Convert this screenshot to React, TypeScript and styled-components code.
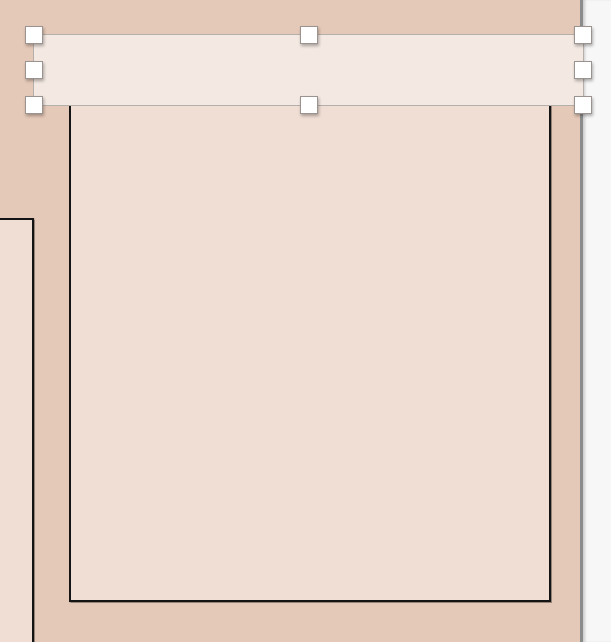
import React from "react";
import styled, { createGlobalStyle } from "styled-components";

const GlobalStyle = createGlobalStyle`
  html, body {
    margin: 0;
    padding: 0;
    background: #e5c9b8;
    font-family: "Liberation Sans", Arial, sans-serif;
    overflow: hidden;
  }
`;

type Frame = { left: number; top: number; width: number; height: number };

const frames: Frame[] = [
  { left: -20, top: 218, width: 54, height: 460 },
  { left: 69, top: 60, width: 482, height: 542 },
];

const selection: Frame = { left: 33, top: 34, width: 551, height: 72 };

const handlePoints = [
  [0, 0],
  [0.5, 0],
  [1, 0],
  [0, 0.5],
  [1, 0.5],
  [0, 1],
  [0.5, 1],
  [1, 1],
];

function App() {
  return (
    <>
      <GlobalStyle />
      <Editor>
        <Canvas>
          {frames.map((f, i) => (
            <Box key={i} $f={f} />
          ))}
          <Selection $f={selection}>
            {handlePoints.map(([x, y], i) => (
              <Handle key={i} $x={x} $y={y} />
            ))}
          </Selection>
        </Canvas>
        <SidePanel />
      </Editor>
    </>
  );
}

const Editor = styled.div`
  display: flex;
  width: 611px;
  height: 642px;
  overflow: hidden;
`;

const Canvas = styled.div`
  position: relative;
  flex: 0 0 580px;
  height: 100%;
  background: #e5c9b8;
`;

const SidePanel = styled.div`
  flex: 1;
  height: 100%;
  background: #f7f7f7;
  border-left: 3px solid #8c8c8c;
  box-shadow: inset 3px 0 3px -1px rgba(0, 0, 0, 0.18);
`;

const Box = styled.div<{ $f: Frame }>`
  position: absolute;
  left: ${(p) => p.$f.left}px;
  top: ${(p) => p.$f.top}px;
  width: ${(p) => p.$f.width}px;
  height: ${(p) => p.$f.height}px;
  box-sizing: border-box;
  background: #f0ded4;
  border: 2.5px solid #141414;
  box-shadow: 0 0 1px 0.5px rgba(0, 0, 0, 0.35);
`;

const Selection = styled.div<{ $f: Frame }>`
  position: absolute;
  left: ${(p) => p.$f.left}px;
  top: ${(p) => p.$f.top}px;
  width: ${(p) => p.$f.width}px;
  height: ${(p) => p.$f.height}px;
  box-sizing: border-box;
  background: #f3e8e2;
  border: 1px solid #b5afab;
  z-index: 2;
`;

const Handle = styled.div<{ $x: number; $y: number }>`
  position: absolute;
  left: ${(p) => p.$x * 100}%;
  top: ${(p) => p.$y * 100}%;
  width: 16px;
  height: 16px;
  margin: -9px 0 0 -9px;
  background: #fff;
  border: 1px solid #9a9390;
  box-sizing: content-box;
  box-shadow: 1px 2px 3px rgba(0, 0, 0, 0.3);
`;

export default App;
